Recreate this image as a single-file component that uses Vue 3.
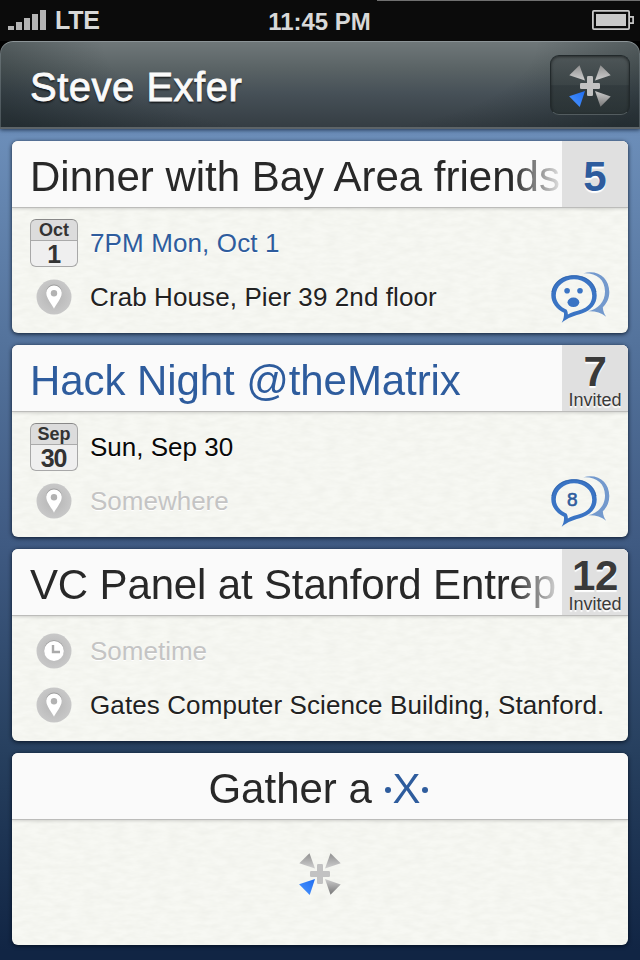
<script setup>
const events = [
  {
    title: 'Dinner with Bay Area friends', count: 5, blueCount: true,
    month: 'Oct', day: '1', time: '7PM Mon, Oct 1', blueTime: true,
    place: 'Crab House, Pier 39 2nd floor', chat: 'face',
  },
  {
    title: 'Hack Night @theMatrix', blueTitle: true, count: 7, invited: true,
    month: 'Sep', day: '30', time: 'Sun, Sep 30', place: '', chat: '8',
  },
  {
    title: 'VC Panel at Stanford Entrep', tight: true, count: 12, invited: true,
    time: '', place: 'Gates Computer Science Building, Stanford.',
  },
]
const bars = [4, 8, 12, 16, 20]
</script>

<template>
  <div class="screen">
    <svg class="defs" width="0" height="0">
      <defs>
        <linearGradient id="spokeTop" x1="0" y1="0" x2="0" y2="1">
          <stop offset="0" stop-color="#909090" /><stop offset="1" stop-color="#cfcfcf" />
        </linearGradient>
        <linearGradient id="spokeBottom" x1="0" y1="0" x2="0" y2="1">
          <stop offset="0" stop-color="#cccccc" /><stop offset="1" stop-color="#777777" />
        </linearGradient>
        <linearGradient id="spokeBlue" x1="1" y1="0" x2="0" y2="1">
          <stop offset="0" stop-color="#1e6cf0" /><stop offset="1" stop-color="#4e97ff" />
        </linearGradient>
        <radialGradient id="disc">
          <stop offset="0" stop-color="#b4b4b4" /><stop offset="1" stop-color="#c8c8c8" />
        </radialGradient>
        <filter id="grain" x="0" y="0" width="100%" height="100%" color-interpolation-filters="sRGB">
          <feTurbulence type="fractalNoise" baseFrequency="0.07 0.2" numOctaves="3" seed="4" />
          <feColorMatrix values="0 0 0 0 0.45  0 0 0 0 0.46  0 0 0 0 0.38  0 0 0 0.08 -0.022" />
        </filter>
        <symbol id="spokes" viewBox="-22 -22 44 44">
          <path d="M-10.5-20.7-20.7-10.7-5-5.5Z" fill="url(#spokeTop)" />
          <path d="M10.5-20.7 20.7-10.7 5-5.5Z" fill="url(#spokeTop)" />
          <path d="M10.5 20.7 20.7 10.5 5 5Z" fill="url(#spokeBottom)" />
          <path d="M-10.3 20.9-20.9 10.3-5 5Z" fill="url(#spokeBlue)" />
          <rect x="-10" y="-3" width="20" height="6" rx="1.3" fill="#c2c2c2" />
          <rect x="-3" y="-10" width="6" height="20" rx="1.3" fill="#c2c2c2" />
        </symbol>
      </defs>
    </svg>

    <div class="status">
      <div class="hairline"></div>
      <div class="signal">
        <svg width="38" height="20" viewBox="0 0 38 20">
          <rect v-for="(h, i) in bars" :key="i" :x="i * 8" :y="20 - h" width="6" :height="h" fill="#b5b5b5" />
        </svg>
        <span class="carrier">LTE</span>
      </div>
      <div class="clock">11:45 PM</div>
      <svg class="battery" width="42" height="20" viewBox="0 0 42 20">
        <rect x=".9" y=".9" width="36.2" height="18.2" rx="1" fill="none" stroke="#c9c9c9" stroke-width="1.8" />
        <rect x="4" y="4" width="30" height="12" fill="#c9c9c9" />
        <path d="M38 6.8h3.1v6.4H38" fill="none" stroke="#c9c9c9" stroke-width="1.7" />
      </svg>
    </div>

    <div class="header-wrap">
      <header class="header">
        <h1>Steve Exfer</h1>
        <button class="menu"><svg width="44" height="44"><use href="#spokes" /></svg></button>
      </header>
    </div>

    <main class="list">
      <article v-for="e in events" :key="e.title" class="card">
        <div class="head">
          <h2 :class="{ blue: e.blueTitle, tight: e.tight }">{{ e.title }}</h2>
          <div class="count" :class="{ blue: e.blueCount, small: e.invited }">
            <b>{{ e.count }}</b>
            <span v-if="e.invited">Invited</span>
          </div>
        </div>
        <div class="body">
          <svg class="paper" width="616" height="125"><rect width="616" height="125" filter="url(#grain)" /></svg>
          <div class="row">
            <div class="icon">
              <div v-if="e.month" class="cal">
                <span class="month">{{ e.month }}</span>
                <span class="day">{{ e.day }}</span>
              </div>
              <svg v-else width="36" height="36" viewBox="-18 -18 36 36">
                <circle r="17.5" fill="url(#disc)" />
                <circle cy="-.8" r="10" fill="#999" />
                <circle r="9.9" fill="#fff" />
                <path d="M-1-6V1H6" fill="none" stroke="#aaa" stroke-width="2.4" />
              </svg>
            </div>
            <span class="text" :class="{ blue: e.blueTime, ghost: !e.time, strong: e.chat === '8' }">{{ e.time || 'Sometime' }}</span>
          </div>
          <div class="row">
            <div class="icon">
              <svg width="36" height="36" viewBox="-18 -18 36 36">
                <circle r="17.5" fill="url(#disc)" />
                <path d="M0 10.8C-1.5 7-7.8.5-7.8-5.2A7.8 7.3 0 0 1 7.8-5.2C7.8.5 1.5 7 0 10.8Z" fill="#9b9b9b" />
                <path d="M0 11.8C-1.5 8-7.8 1.5-7.8-4.2A7.8 7.3 0 0 1 7.8-4.2C7.8 1.5 1.5 8 0 11.8Z" fill="#fff" />
                <circle cy="-3.8" r="3.2" fill="#b2b2b2" />
              </svg>
            </div>
            <span class="text place" :class="{ ghost: !e.place }">{{ e.place || 'Somewhere' }}</span>
            <svg v-if="e.chat" class="chat" width="60" height="54" viewBox="0 0 60 54">
              <path d="M33.3 3.2C48-1 59.3 8 59.3 22 59.3 28 57 33.5 52.8 37.2 53 41 54.3 44 56.2 46.8 51 42.5 45 41 38.3 41.3 48 39 55 32 55 21.5 55 9 46 2.5 33.3 3.2Z" fill="#7399cd" />
              <path fill-rule="evenodd" d="M11.7 52.7C13.6 49.5 14.2 46 14 42.8 6 39 1.3 32.5 1.3 25.5 1.3 14 11 5.3 24 5.3 37 5.3 46.7 14 46.7 25.5 46.7 34 41 40.3 32.5 43.2 25 45.6 17.5 47.5 11.7 52.7ZM17.9 44.4C17.9 42.8 17.5 41.2 16.7 39.8 10 36.8 5.8 31.5 5.8 25.5 5.8 16.3 14 9.2 24 9.2 34 9.2 42.2 16.3 42.2 25.5 42.2 33 37.5 37.3 31.5 39.4 26.5 41.2 21 42 17.9 44.4Z" fill="#3a74c4" />
              <path d="M2 22C3.6 12 12.5 5.8 24 5.8S44.4 12 46 22" fill="none" stroke="#2c5fa8" stroke-width="1.1" opacity=".7" />
              <g v-if="e.chat === 'face'" fill="#3a74c4">
                <circle cx="17.1" cy="20.8" r="2.8" /><circle cx="30" cy="20.8" r="2.8" />
                <ellipse cx="23.4" cy="32.3" rx="5.9" ry="4.8" />
              </g>
              <text v-else x="22.4" y="32" text-anchor="middle" class="num">{{ e.chat }}</text>
            </svg>
          </div>
        </div>
      </article>

      <article class="card">
        <div class="head">
          <h2 class="gather">Gather a <span class="x"><i></i>X<i></i></span></h2>
        </div>
        <div class="body center">
          <svg class="paper" width="616" height="125"><rect width="616" height="125" filter="url(#grain)" /></svg>
          <svg class="mark" width="44" height="44"><use href="#spokes" /></svg>
        </div>
      </article>
    </main>
  </div>
</template>

<style>
body { margin: 0; background: #112544; }
</style>

<style scoped>
.screen {
  width: 640px; height: 960px; overflow: hidden;
  display: flex; flex-direction: column;
  font-family: "Liberation Sans", Arial, sans-serif;
  background: linear-gradient(#6c8eb9 130px, #54739c 340px, #3f5a82 545px, #27405f 750px, #112544 950px);
}
.defs { position: absolute; }
.status {
  position: relative; flex: none; height: 41px; box-sizing: border-box;
  background: #0b0b0b; color: #d8d8d8;
  display: grid; grid-template-columns: 1fr auto 1fr; align-items: start;
  padding: 10px 6px 0 8px; font-weight: bold;
}
.hairline { position: absolute; top: 0; left: 377px; right: 0; height: 1px; background: #707070; }
.signal { display: flex; gap: 9px; }
.carrier { font-size: 25px; line-height: 20px; letter-spacing: -.2px; }
.clock { font-size: 24px; line-height: 24px; margin-right: 3px; }
.battery { justify-self: end; }
.header-wrap { flex: none; height: 88px; background: #000; box-shadow: 0 1px 4px rgba(10, 25, 50, .75); }
.header {
  height: 88px; box-sizing: border-box; padding: 0 10px 0 30px;
  display: flex; align-items: center; justify-content: space-between;
  border-radius: 13px 13px 0 0;
  background:
    radial-gradient(ellipse 360px 150px at 50% 0, transparent 60%, rgba(8, 18, 20, .38) 100%),
    linear-gradient(#70787a, #5b6466 30%, #465057 60%, #343c42);
  box-shadow: inset 0 1px 0 #8c9497, inset 0 -2px 0 #5d6468, inset 1px 0 0 rgba(150, 160, 165, .35), inset -1px 0 0 rgba(150, 160, 165, .35);
}
h1 {
  margin: 0; padding-top: 4px; font-size: 40px; font-weight: normal; line-height: 48px; letter-spacing: .5px;
  color: #fafafa; -webkit-text-stroke: .8px #fafafa; text-shadow: 0 2px 2px rgba(0, 0, 0, .7);
}
.menu {
  width: 80px; height: 60px; padding: 2px 0 0; border: 1px solid #22292b; border-bottom-color: #535c5f;
  border-radius: 9px; display: flex; align-items: center; justify-content: center;
  background: linear-gradient(#4e5658, #3b4446 50%, #333c3f 51%, #2a3335);
  box-shadow: inset 0 1px 3px rgba(0, 0, 0, .5);
}
.list { display: flex; flex-direction: column; gap: 12px; padding: 12px; }
.card {
  height: 192px; border-radius: 6px; overflow: hidden; flex: none;
  background: #f7f8f3; box-shadow: 0 1px 4px rgba(0, 10, 25, .85);
}
.head {
  position: relative; height: 66px; display: flex; background: #fafafa;
  box-shadow: 0 1px 0 #bcbcba, 0 2px 3px rgba(0, 0, 0, .16); z-index: 1;
}
h2 {
  flex: 1; min-width: 0; margin: 0; padding-left: 18px; overflow: hidden; white-space: nowrap;
  font-size: 42px; font-weight: normal; line-height: 71px; color: #282828;
  -webkit-mask-image: linear-gradient(90deg, #000 500px, transparent 555px);
  mask-image: linear-gradient(90deg, #000 500px, transparent 555px);
}
h2.tight { letter-spacing: -.15px; }
.blue, h2.blue { color: #2e5c9d; }
h2.blue { letter-spacing: -.08px; }
.count {
  flex: none; width: 66px; background: #e0e0e0; color: #3a3a3a; text-align: center;
  display: flex; flex-direction: column; text-shadow: 0 2px 1px #fff;
}
.count.blue { color: #2e5c9d; }
.count b { font-size: 42px; line-height: 72px; }
.count.small b { line-height: 41px; padding-top: 6px; letter-spacing: -.3px; }
.count span { font-size: 18px; line-height: 18px; margin-top: -1px; white-space: nowrap; }
.body { position: relative; height: 126px; box-sizing: border-box; padding-top: 9px; }
.paper { position: absolute; left: 0; top: 1px; }
.row { position: relative; height: 54px; display: flex; align-items: center; padding-left: 18px; }
.icon { width: 48px; height: 54px; margin-right: 12px; display: flex; align-items: center; justify-content: center; }
.cal {
  width: 48px; height: 48px; box-sizing: border-box; border: 1.5px solid #a8a8a8; border-top-color: #888;
  border-radius: 6px; display: flex; flex-direction: column; align-items: center;
  background: linear-gradient(#dcdcdc 20px, #aaa 20px, #aaa 21px, #efefef 21px);
  color: #333; font-weight: bold;
}
.month { font-size: 18px; line-height: 21px; }
.day { font-size: 25px; line-height: 26px; letter-spacing: -1.2px; transform: translateX(-.5px); }
.text { font-size: 26px; line-height: 54px; color: #222; white-space: nowrap; text-shadow: 0 1px 0 #fff; }
.text.place { letter-spacing: .1px; }
.text.strong { color: #080808; }
.text.blue { color: #2e5c9d; letter-spacing: .12px; }
.text.ghost { color: #c4c4c4; letter-spacing: 0; }
.chat { position: absolute; right: 18px; top: 0; }
.num { font-size: 19px; fill: #2e5c9d; stroke: #2e5c9d; stroke-width: .6px; }
.gather { padding: 0 2px 0 0; text-align: center; }
.x { color: #2e5c9d; }
.x i { display: inline-block; width: 6px; height: 6px; border-radius: 50%; background: #2e5c9d; vertical-align: 10px; margin: 0 1.5px; }
.center { display: flex; justify-content: center; }
.mark { position: relative; margin-top: 24px; }
</style>
